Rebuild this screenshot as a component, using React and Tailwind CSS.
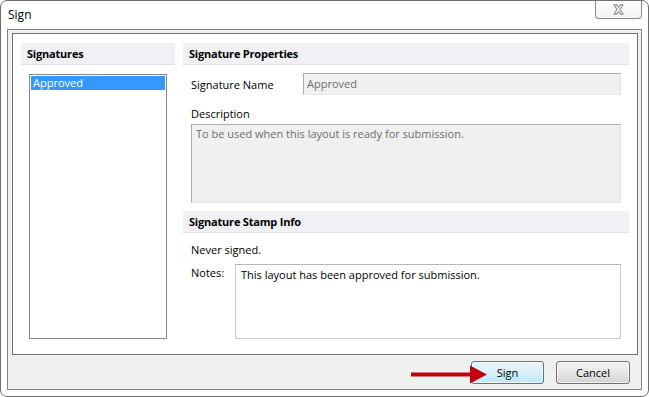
const fontStack = "font-['Open_Sans','Noto_Sans',sans-serif]";

const SectionHeader = ({ children }) => (
    <div className="h-[22px] bg-[#f0f0f5] border-b border-[#dfe0e8] flex items-center pl-[6px] font-bold tracking-[-0.2px] leading-none">
        {children}
    </div>
);

const CloseGlyph = () => (
    <svg width="11" height="11" viewBox="0 0 11 11">
        <path
            d="M0.8 0.8h3l1.7 2.6 1.7-2.6h3l-3.2 4.7 3.2 4.7h-3l-1.7-2.6-1.7 2.6h-3l3.2-4.7z"
            fill="#ececec"
            stroke="#6c6c6c"
            strokeWidth="0.9"
            strokeLinejoin="round"
        />
    </svg>
);

const Arrow = () => (
    <svg className="absolute left-[411px] top-[365px]" width="77" height="19" viewBox="0 0 77 19">
        <rect x="0" y="7.5" width="62" height="4" fill="#c1000b" />
        <polygon points="59,0.5 76,9.5 59,18.5" fill="#c1000b" />
    </svg>
);

export default function App() {
    return (
        <div className={`relative w-[649px] h-[397px] bg-white text-[11px] text-black ${fontStack}`}>
            <div className="w-[649px] h-[397px] border border-[#6e6e6e] rounded-[7px] bg-white flex flex-col overflow-hidden">
                {/* title bar */}
                <div className="h-[28px] shrink-0 flex justify-between items-start">
                    <span className="pl-[7px] pt-[6px] leading-[16px] text-[12px]">Sign</span>
                    <button className="mr-[6px] w-[47px] h-[18px] border border-t-0 border-[#8a8a8a] rounded-b-[4px] bg-gradient-to-b from-white to-[#f3f3f3] flex items-center justify-center">
                        <CloseGlyph />
                    </button>
                </div>

                {/* client area */}
                <div className="mx-[6px] mb-[6px] flex-1 border border-[#838383] bg-[#f0f0f0] flex flex-col pl-[4px] pr-[3px] pt-[3px]">
                    <div className="h-[322px] shrink-0 border border-[#707070] bg-white flex gap-[8px] pl-[8px] pr-[8px] pt-[9px]">
                        {/* signatures list */}
                        <div className="w-[154px] flex flex-col">
                            <SectionHeader>Signatures</SectionHeader>
                            <div className="ml-[8px] mt-[9px] w-[138px] h-[265px] border border-[#828790] bg-white p-[1px]">
                                <div className="h-[14px] bg-[#3399ff] text-white pl-[2px] leading-[14px]">Approved</div>
                            </div>
                        </div>

                        {/* properties */}
                        <div className="flex-1 flex flex-col">
                            <SectionHeader>Signature Properties</SectionHeader>

                            <div className="mt-[8px] ml-[8px] mr-[8px] flex items-center">
                                <span className="w-[112px] leading-[15px]">Signature Name</span>
                                <div className="flex-1 h-[22px] bg-[#f0f0f0] border border-[#abadb3] border-r-[#dbdfe6] border-b-[#e3e9ef] flex items-center pl-[3px] text-[#6d6d6d]">
                                    Approved
                                </div>
                            </div>

                            <div className="mt-[11px] ml-[8px] leading-[15px]">Description</div>
                            <div className="mt-[3px] ml-[8px] mr-[8px] h-[79px] bg-[#f0f0f0] border border-[#abadb3] border-r-[#dbdfe6] border-b-[#e3e9ef] pl-[4px] pt-[1px] leading-[16px] text-[#6d6d6d]">
                                To be used when this layout is ready for submission.
                            </div>

                            <div className="mt-[8px]">
                                <SectionHeader>Signature Stamp Info</SectionHeader>
                            </div>

                            <div className="mt-[9px] ml-[8px] leading-[15px]">Never signed.</div>

                            <div className="mt-[7px] ml-[8px] mr-[8px] flex items-start">
                                <span className="w-[44px] pt-[1px] leading-[15px]">Notes:</span>
                                <div className="flex-1 h-[75px] bg-white border border-[#c9c9c9] border-t-[#b5b5b5] pl-[5px] pt-[2px] leading-[16px]">
                                    This layout has been approved for submission.
                                </div>
                            </div>
                        </div>
                    </div>

                    {/* buttons */}
                    <div className="flex justify-end gap-[12px] pt-[6px] pr-[8px]">
                        <button className="w-[73px] h-[23px] rounded-[3px] border border-[#3c7fb1] bg-gradient-to-b from-[#eaf6fd] via-[#d9f0fc] to-[#bee6fd] shadow-[inset_0_0_0_1px_rgba(255,255,255,0.7)] leading-none">
                            Sign
                        </button>
                        <button className="w-[74px] h-[23px] rounded-[3px] border border-[#707070] bg-gradient-to-b from-[#f2f2f2] via-[#e6e6e6] to-[#d3d3d3] shadow-[inset_0_0_0_1px_rgba(255,255,255,0.7)] leading-none">
                            Cancel
                        </button>
                    </div>
                </div>
            </div>
            <Arrow />
        </div>
    );
}
